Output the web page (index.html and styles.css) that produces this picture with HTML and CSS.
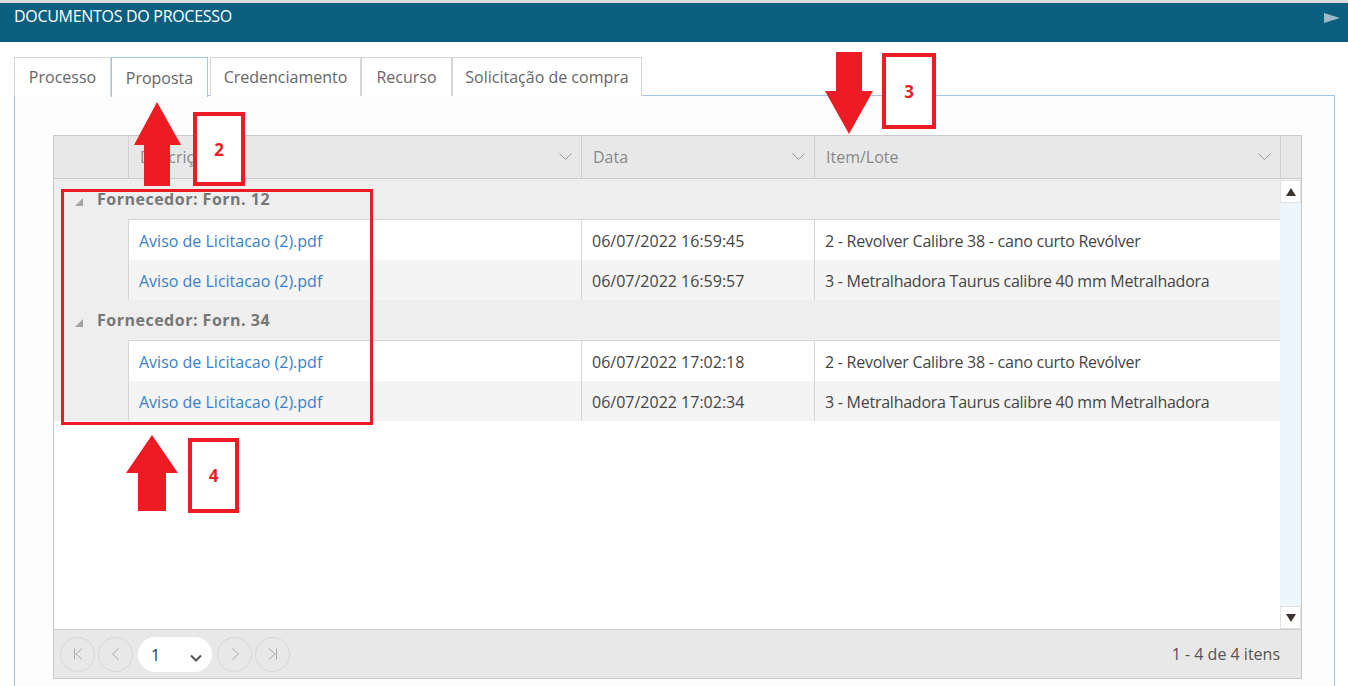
FILE: index.html
```html
<!DOCTYPE html>
<html lang="pt-BR">
<head>
<meta charset="utf-8">
<title>Documentos do processo</title>
<link rel="stylesheet" href="styles.css">
</head>
<body>
<div class="topline"></div>
<header class="titlebar">
  <span class="title">DOCUMENTOS DO PROCESSO</span>
  <svg class="title-arrow" width="16" height="10" viewBox="0 0 16 10"><polygon points="0,0 16,5 0,10" fill="#9db9c9"/></svg>
</header>

<nav class="tabs">
  <div class="tab tab-processo">Processo</div>
  <div class="tab tab-proposta active">Proposta</div>
  <div class="tab tab-cred">Credenciamento</div>
  <div class="tab tab-recurso">Recurso</div>
  <div class="tab tab-solic">Solicitação de compra</div>
</nav>

<section class="panel">
  <div class="grid">
    <div class="grid-head">
      <div class="hcell hcell-indent"></div>
      <div class="hcell"><span>Descrição</span><svg class="chev" width="13" height="7" viewBox="0 0 13 7"><polyline points="0.5,0.5 6.5,6.5 12.5,0.5" fill="none" stroke="#999" stroke-width="1"/></svg></div>
      <div class="hcell"><span>Data</span><svg class="chev" width="13" height="7" viewBox="0 0 13 7"><polyline points="0.5,0.5 6.5,6.5 12.5,0.5" fill="none" stroke="#999" stroke-width="1"/></svg></div>
      <div class="hcell"><span>Item/Lote</span><svg class="chev" width="13" height="7" viewBox="0 0 13 7"><polyline points="0.5,0.5 6.5,6.5 12.5,0.5" fill="none" stroke="#999" stroke-width="1"/></svg></div>
      <div class="hcell hcell-scroll"></div>
    </div>

    <div class="grid-body">
      <div class="rows">
        <div class="group">
          <div class="group-head"><span class="collapse"></span><span>Fornecedor: Forn. 12</span></div>
          <div class="items">
            <div class="row"><div class="cell"><a class="link">Aviso de Licitacao (2).pdf</a></div><div class="cell">06/07/2022 16:59:45</div><div class="cell cell-item">2 - Revolver Calibre 38 - cano curto Revólver</div></div>
            <div class="row alt"><div class="cell"><a class="link">Aviso de Licitacao (2).pdf</a></div><div class="cell">06/07/2022 16:59:57</div><div class="cell cell-item">3 - Metralhadora Taurus calibre 40 mm Metralhadora</div></div>
          </div>
        </div>
        <div class="group">
          <div class="group-head"><span class="collapse"></span><span>Fornecedor: Forn. 34</span></div>
          <div class="items">
            <div class="row"><div class="cell"><a class="link">Aviso de Licitacao (2).pdf</a></div><div class="cell">06/07/2022 17:02:18</div><div class="cell cell-item">2 - Revolver Calibre 38 - cano curto Revólver</div></div>
            <div class="row alt"><div class="cell"><a class="link">Aviso de Licitacao (2).pdf</a></div><div class="cell">06/07/2022 17:02:34</div><div class="cell cell-item">3 - Metralhadora Taurus calibre 40 mm Metralhadora</div></div>
          </div>
        </div>
      </div>
      <div class="scrollbar">
        <div class="sbtn"><svg width="10" height="8" viewBox="0 0 10 8"><polygon points="5,0 10,8 0,8" fill="#3b3431"/></svg></div>
        <div class="sbtn"><svg width="10" height="8" viewBox="0 0 10 8"><polygon points="0,0 10,0 5,8" fill="#3b3431"/></svg></div>
      </div>
    </div>

    <div class="pager">
      <div class="pager-nav">
        <div class="pbtn"><svg width="14" height="14" viewBox="0 0 14 14"><path d="M3.5 1.5v11M11 1.5L5 7L11 12.5" fill="none" stroke="#a8a8a8" stroke-width="1"/></svg></div>
        <div class="pbtn"><svg width="14" height="14" viewBox="0 0 14 14"><path d="M9.5 1.5L3.5 7L9.5 12.5" fill="none" stroke="#a8a8a8" stroke-width="1"/></svg></div>
        <div class="pselect"><span>1</span><svg width="12" height="8" viewBox="0 0 12 8"><polyline points="1,1.5 6,6.5 11,1.5" fill="none" stroke="#555" stroke-width="2"/></svg></div>
        <div class="pbtn"><svg width="14" height="14" viewBox="0 0 14 14"><path d="M4.5 1.5L10.5 7L4.5 12.5" fill="none" stroke="#a8a8a8" stroke-width="1"/></svg></div>
        <div class="pbtn"><svg width="14" height="14" viewBox="0 0 14 14"><path d="M3 1.5L9 7L3 12.5M10.5 1.5v11" fill="none" stroke="#a8a8a8" stroke-width="1"/></svg></div>
      </div>
      <span class="pager-info">1 - 4 de 4 itens</span>
    </div>
  </div>
</section>

<svg class="marks" width="1348" height="686" viewBox="0 0 1348 686">
  <polygon points="157,102 181,145 170,145 170,186 144,186 144,145 134,145" fill="#ed1c24"/>
  <polygon points="836,52 862,52 862,91 873,91 849,134 825,91 836,91" fill="#ed1c24"/>
  <polygon points="152,435 178,473 166,473 166,511 138,511 138,473 126,473" fill="#ed1c24"/>
</svg>
<div class="mark-box box-2">2</div>
<div class="mark-box box-3">3</div>
<div class="mark-box box-4">4</div>
<div class="mark-box box-big"></div>
</body>
</html>
```

FILE: styles.css
```css
* { box-sizing: border-box; }
html, body { margin: 0; padding: 0; }
body {
  width: 1348px;
  height: 686px;
  overflow: hidden;
  background: #ffffff;
  font-family: "Open Sans", "Noto Sans", sans-serif;
  font-size: 16px;
  color: #444;
  position: relative;
}

.topline { height: 3px; background: #dcdcdc; }
.titlebar {
  height: 39px;
  background: #0a5f7f;
  display: flex;
  justify-content: space-between;
  align-items: flex-start;
  padding: 3px 8px 0 14px;
}
.title {
  color: #fff;
  font-size: 16px;
  letter-spacing: -0.3px;
  line-height: 20px;
}
.title-arrow { margin-top: 7px; }

.tabs {
  display: flex;
  margin: 15px 0 -1px 14px;
  height: 39px;
  position: relative;
  z-index: 1;
}
.tab {
  height: 39px;
  border: 1px solid #d6d6d6;
  border-bottom: none;
  background: #fff;
  color: #666;
  font-size: 16px;
  display: flex;
  align-items: center;
  justify-content: center;
  margin-right: 2px;
}
.tab-processo { width: 97px; margin-right: 0; }
.tab-proposta { width: 97px; }
.tab-cred { width: 151px; margin-right: 0; }
.tab-recurso { width: 91px; margin-right: 0; }
.tab-solic { width: 190px; }
.tab.active { border-color: #a3c7ea; height: 40px; }

.panel {
  margin-left: 14px;
  width: 1321px;
  height: 600px;
  border: 1px solid #a3c7ea;
  border-bottom: none;
  background: #fdfdfd;
  padding: 39px 0 0 38px;
}

.grid {
  width: 1249px;
  border: 1px solid #c9c9c9;
  background: #fff;
}
.grid-head {
  display: grid;
  grid-template-columns: 74px 453px 233px 466px 21px;
  height: 43px;
  background: #e8e8e8;
  border-bottom: 1px solid #cdcdcd;
}
.hcell {
  display: flex;
  align-items: center;
  justify-content: space-between;
  padding: 0 9px 0 11px;
  border-left: 1px solid #d2d2d2;
  color: #888;
  font-size: 16px;
}
.hcell-indent { border-left: none; }
.hcell-scroll { padding: 0; }
.chev { margin-top: -2px; }

.grid-body {
  display: flex;
  height: 450px;
}
.rows { width: 1226px; }
.group { background: #eeeeee; }
.group-head {
  height: 40px;
  display: flex;
  align-items: center;
  font-weight: bold;
  color: #777;
  letter-spacing: 0.5px;
  padding-left: 21px;
}
.collapse {
  width: 0; height: 0;
  border-left: 8px solid transparent;
  border-bottom: 8px solid #a3a3a3;
  margin: 6px 14px 0 0;
}
.items {
  margin-left: 74px;
  border-top: 1px solid #d6d6d6;
}
.row {
  display: grid;
  grid-template-columns: 453px 233px 1fr;
  height: 40px;
  background: #fff;
}
.row.alt { background: #f4f4f4; }
.cell {
  display: flex;
  align-items: center;
  padding: 2px 0 0 10px;
  border-left: 1px solid #d6d6d6;
  white-space: nowrap;
}
.cell-item { letter-spacing: -0.25px; }
.link { color: #3a7fcc; }

.scrollbar {
  width: 21px;
  background: #eef6fd;
  display: flex;
  flex-direction: column;
  justify-content: space-between;
  padding-top: 1px;
}
.sbtn {
  height: 23px;
  background: #fff;
  border: 1px solid #e2e2e2;
  display: flex;
  align-items: center;
  justify-content: center;
}

.pager {
  height: 49px;
  border-top: 1px solid #cdcdcd;
  background: #e8e8e8;
  display: flex;
  align-items: center;
  justify-content: space-between;
  padding: 0 21px 0 6px;
}
.pager-nav { display: flex; align-items: center; gap: 3px; }
.pbtn {
  width: 35px; height: 35px;
  border: 1px solid #d6d6d6;
  border-radius: 50%;
  display: flex;
  align-items: center;
  justify-content: center;
}
.pselect {
  width: 74px; height: 35px;
  background: #fff;
  border-radius: 18px;
  display: flex;
  align-items: center;
  justify-content: space-between;
  padding: 2px 10px 0 13px;
  color: #333;
  font-size: 16px;
  margin: 0 2px;
}
.pselect svg { margin-top: 6px; }
.pager-info { color: #555; font-size: 16px; }

.marks { position: absolute; left: 0; top: 0; pointer-events: none; }
.mark-box {
  position: absolute;
  border: 4px solid #ed1c24;
  color: #ed1c24;
  font-weight: bold;
  font-size: 17px;
  display: flex;
  align-items: center;
  justify-content: center;
  background: #fff;
}
.box-2 { left: 193px; top: 112px; width: 52px; height: 74px; }
.box-3 { left: 882px; top: 53px; width: 54px; height: 76px; }
.box-4 { left: 188px; top: 438px; width: 51px; height: 75px; }
.box-big { left: 61px; top: 189px; width: 312px; height: 236px; border-width: 3px; background: transparent; }
```
